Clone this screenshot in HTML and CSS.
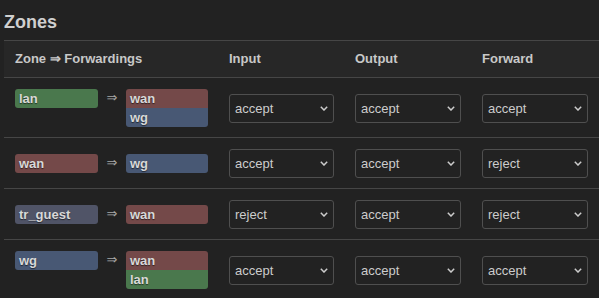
FILE: index.html
```html
<!DOCTYPE html>
<html lang="en">
<head>
  <meta charset="UTF-8">
  <title>Firewall - Zones</title>
  <link rel="stylesheet" href="styles.css">
</head>
<body>
  <div class="page">
    <h2 class="section-title">Zones</h2>
    <div class="zone-table">
      <!-- Header -->
      <div class="zone-row zone-head">
        <div class="cell cell-fwd">Zone &rArr; Forwardings</div>
        <div class="cell">Input</div>
        <div class="cell">Output</div>
        <div class="cell">Forward</div>
      </div>
      <!-- lan -->
      <div class="zone-row">
        <div class="cell cell-fwd">
          <span class="badge lan">lan</span>
          <span class="fwd-arrow">&rArr;</span>
          <div class="badge-stack">
            <span class="badge wan">wan</span>
            <span class="badge wg">wg</span>
          </div>
        </div>
        <div class="cell"><div class="select-wrap"><select><option>accept</option></select><svg class="chev" viewBox="0 0 8 5"><path d="M0.8 0.8 L4 4 L7.2 0.8"/></svg></div></div>
        <div class="cell"><div class="select-wrap"><select><option>accept</option></select><svg class="chev" viewBox="0 0 8 5"><path d="M0.8 0.8 L4 4 L7.2 0.8"/></svg></div></div>
        <div class="cell"><div class="select-wrap"><select><option>accept</option></select><svg class="chev" viewBox="0 0 8 5"><path d="M0.8 0.8 L4 4 L7.2 0.8"/></svg></div></div>
      </div>
      <!-- wan -->
      <div class="zone-row">
        <div class="cell cell-fwd">
          <span class="badge wan">wan</span>
          <span class="fwd-arrow">&rArr;</span>
          <div class="badge-stack">
            <span class="badge wg">wg</span>
          </div>
        </div>
        <div class="cell"><div class="select-wrap"><select><option>accept</option></select><svg class="chev" viewBox="0 0 8 5"><path d="M0.8 0.8 L4 4 L7.2 0.8"/></svg></div></div>
        <div class="cell"><div class="select-wrap"><select><option>accept</option></select><svg class="chev" viewBox="0 0 8 5"><path d="M0.8 0.8 L4 4 L7.2 0.8"/></svg></div></div>
        <div class="cell"><div class="select-wrap"><select><option>reject</option></select><svg class="chev" viewBox="0 0 8 5"><path d="M0.8 0.8 L4 4 L7.2 0.8"/></svg></div></div>
      </div>
      <!-- tr_guest -->
      <div class="zone-row">
        <div class="cell cell-fwd">
          <span class="badge guest">tr_guest</span>
          <span class="fwd-arrow">&rArr;</span>
          <div class="badge-stack">
            <span class="badge wan">wan</span>
          </div>
        </div>
        <div class="cell"><div class="select-wrap"><select><option>reject</option></select><svg class="chev" viewBox="0 0 8 5"><path d="M0.8 0.8 L4 4 L7.2 0.8"/></svg></div></div>
        <div class="cell"><div class="select-wrap"><select><option>accept</option></select><svg class="chev" viewBox="0 0 8 5"><path d="M0.8 0.8 L4 4 L7.2 0.8"/></svg></div></div>
        <div class="cell"><div class="select-wrap"><select><option>reject</option></select><svg class="chev" viewBox="0 0 8 5"><path d="M0.8 0.8 L4 4 L7.2 0.8"/></svg></div></div>
      </div>
      <!-- wg -->
      <div class="zone-row">
        <div class="cell cell-fwd">
          <span class="badge wg">wg</span>
          <span class="fwd-arrow">&rArr;</span>
          <div class="badge-stack">
            <span class="badge wan">wan</span>
            <span class="badge lan">lan</span>
          </div>
        </div>
        <div class="cell"><div class="select-wrap"><select><option>accept</option></select><svg class="chev" viewBox="0 0 8 5"><path d="M0.8 0.8 L4 4 L7.2 0.8"/></svg></div></div>
        <div class="cell"><div class="select-wrap"><select><option>accept</option></select><svg class="chev" viewBox="0 0 8 5"><path d="M0.8 0.8 L4 4 L7.2 0.8"/></svg></div></div>
        <div class="cell"><div class="select-wrap"><select><option>accept</option></select><svg class="chev" viewBox="0 0 8 5"><path d="M0.8 0.8 L4 4 L7.2 0.8"/></svg></div></div>
      </div>
    </div>
  </div>
</body>
</html>
```

FILE: styles.css
```css
body {
  margin: 0;
  background: #222222;
  color: #cccccc;
  font-family: 'Liberation Sans', Arial, sans-serif;
  font-size: 13px;
  overflow: hidden;
}
.page {
  padding: 0 0 0 4px;
}
.section-title {
  margin: 11px 0 7px 0;
  font-size: 18px;
  line-height: 22px;
  font-weight: bold;
  color: #cfcfcf;
}
.zone-table {
  width: 595px;
}
.zone-row {
  display: grid;
  grid-template-columns: 215px 126px 127px 127px;
  align-items: center;
  border-bottom: 1px solid #464646;
}
.zone-row .cell {
  padding: 11px 11px 10px 10px;
}
.zone-head {
  background: #272727;
  border-top: 1px solid #464646;
  font-weight: bold;
  color: #c8c8c8;
}
.zone-head .cell {
  padding: 0 10px;
  line-height: 36px;
}
.cell-fwd {
  display: flex;
  align-items: flex-start;
}
.zone-row .cell-fwd {
  padding-left: 11px;
}
.badge {
  display: block;
  width: 83px;
  height: 19px;
  line-height: 19px;
  padding: 0 4px;
  box-sizing: border-box;
  border-radius: 3px;
  font-weight: bold;
  color: #d8d8d8;
  text-shadow: 0 1px 1px rgba(0,0,0,0.55);
}
.badge-stack .badge {
  width: 82px;
}
.badge-stack .badge:first-child:not(:last-child) {
  border-radius: 3px 3px 0 0;
}
.badge-stack .badge:last-child:not(:first-child) {
  border-radius: 0 0 3px 3px;
}
.badge.lan { background: #4a784d; }
.badge.wan { background: #744949; }
.badge.wg { background: #485874; }
.badge.guest { background: #505467; }
.fwd-arrow {
  width: 28px;
  text-align: center;
  line-height: 18px;
  color: #a8a8a8;
  font-family: 'DejaVu Sans', sans-serif;
  font-size: 13px;
}
.select-wrap {
  position: relative;
}
.select-wrap select {
  display: block;
  width: 100%;
  height: 29px;
  -webkit-appearance: none;
  appearance: none;
  background: transparent;
  border: 1px solid #4f4f4f;
  border-radius: 3px;
  color: #cccccc;
  font-family: 'Liberation Sans', Arial, sans-serif;
  font-size: 13px;
  padding: 0 0 0 5px;
}
.chev {
  position: absolute;
  right: 6px;
  top: 12px;
  width: 8px;
  height: 5px;
  pointer-events: none;
}
.chev path {
  fill: none;
  stroke: #cccccc;
  stroke-width: 1.5;
}
```
